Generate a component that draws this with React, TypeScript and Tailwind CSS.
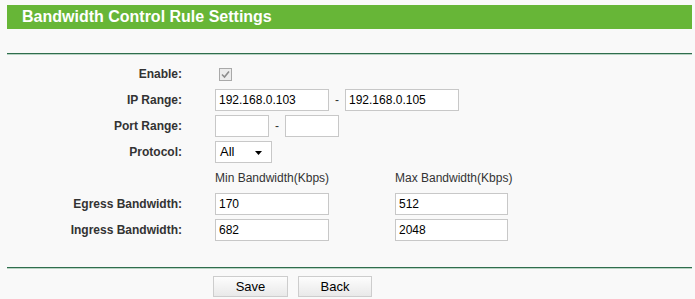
const labelCls = "w-[182px] text-right font-bold text-[12px] text-[#333]";

const Field = ({ value, w = "w-[114px]" }: { value?: string; w?: string }) => (
  <input
    readOnly
    value={value ?? ""}
    className={`${w} h-[22px] border border-[#c8c8c8] bg-white px-[3px] text-[12px] text-black outline-none`}
  />
);

const Row = ({ label, children }: { label?: string; children?: React.ReactNode }) => (
  <div className="flex h-[26px] items-center">
    <div className={labelCls}>{label}</div>
    <div className="ml-[33px] flex items-center">{children}</div>
  </div>
);

const Rule = () => (
  <div className="ml-[7px] mr-[3px]">
    <div className="h-px bg-[#2f6e4d]" />
    <div className="h-px bg-[#b9d3c4]" />
  </div>
);

export default function App() {
  return (
    <div
      className="w-[695px] h-[299px] overflow-hidden bg-[#f9f9f9]"
      style={{ fontFamily: '"Liberation Sans", Arial, sans-serif' }}
    >
      <div className="ml-[7px] mr-[3px] mt-[5px] flex h-[24px] items-center bg-[#67b637] pl-[15px] text-[16px] font-bold text-white">
        Bandwidth Control Rule Settings
      </div>
      <div className="h-[24px]" />
      <Rule />
      <div className="pt-[6px]">
        <Row label="Enable:">
          <div className="ml-[4px] flex h-[13px] w-[13px] items-center justify-center border border-[#a9a9a9] bg-[#ececec]">
            <svg width="9" height="9" viewBox="0 0 9 9">
              <path d="M1 4.5 L3.5 7 L8 1.5" fill="none" stroke="#8c8c8c" strokeWidth="1.6" />
            </svg>
          </div>
        </Row>
        <Row label="IP Range:">
          <Field value="192.168.0.103" />
          <span className="mx-[6px] text-[12px] text-[#333]">-</span>
          <Field value="192.168.0.105" />
        </Row>
        <Row label="Port Range:">
          <Field w="w-[54px]" />
          <span className="mx-[6px] text-[12px] text-[#333]">-</span>
          <Field w="w-[54px]" />
        </Row>
        <Row label="Protocol:">
          <div className="relative flex h-[22px] w-[57px] items-center border border-[#c8c8c8] bg-white pl-[4px] text-[13px] text-black">
            All
            <svg className="absolute right-[9px] top-[9px]" width="7" height="4" viewBox="0 0 7 4">
              <path d="M0 0 H7 L3.5 4 Z" fill="#000" />
            </svg>
          </div>
        </Row>
        <Row>
          <span className="w-[180px] text-[12px] text-[#333]">Min Bandwidth(Kbps)</span>
          <span className="text-[12px] text-[#333]">Max Bandwidth(Kbps)</span>
        </Row>
        <Row label="Egress Bandwidth:">
          <Field value="170" />
          <div className="w-[66px]" />
          <Field value="512" w="w-[113px]" />
        </Row>
        <Row label="Ingress Bandwidth:">
          <Field value="682" />
          <div className="w-[66px]" />
          <Field value="2048" w="w-[113px]" />
        </Row>
      </div>
      <div className="h-[24px]" />
      <Rule />
      <div className="ml-[213px] mt-[7px] flex gap-[10px]">
        <button className="h-[21px] w-[75px] border border-[#cdcdcd] bg-gradient-to-b from-[#fdfdfd] to-[#e9e9e9] text-[13px] text-black">
          Save
        </button>
        <button className="h-[21px] w-[74px] border border-[#cdcdcd] bg-gradient-to-b from-[#fdfdfd] to-[#e9e9e9] text-[13px] text-black">
          Back
        </button>
      </div>
    </div>
  );
}
